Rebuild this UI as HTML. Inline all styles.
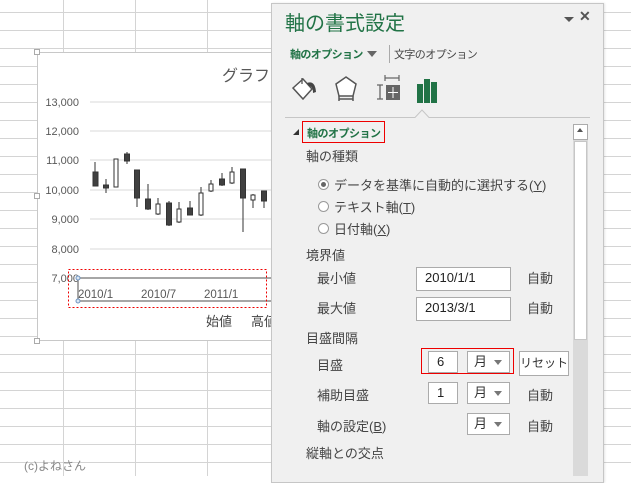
<!DOCTYPE html>
<html><head><meta charset="utf-8"><style>
*{margin:0;padding:0;box-sizing:border-box}
body{width:631px;height:476px;overflow:hidden;background:#fff;position:relative;font-family:"Liberation Sans","Noto Sans CJK JP",sans-serif;color:#444;font-size:12px}
.a{position:absolute;white-space:nowrap}
.vl{position:absolute;width:1px;background:#d4d4d4;top:0;height:476px}
.hl{position:absolute;height:1px;background:#d4d4d4;left:0;width:631px}
.inp{position:absolute;background:#fff;border:1px solid #ababab;font-size:13px;color:#222;padding-left:8px;line-height:20px}
.sel{position:absolute;background:#fff;border:1px solid #ababab;font-size:13px;color:#333;padding-left:6px;line-height:19px;width:43px;height:22px}
.sel:after{content:"";position:absolute;right:7px;top:8px;border:4px solid transparent;border-top:5px solid #777}
.lab{position:absolute;white-space:nowrap;font-size:13px;color:#444}
.rad{position:absolute;width:11px;height:11px;border:1px solid #999;border-radius:50%;background:#fff}
</style></head><body>
<div class="vl" style="left:63px"></div><div class="vl" style="left:135px"></div><div class="vl" style="left:207px"></div>
<div class="hl" style="top:12px"></div><div class="hl" style="top:30px"></div><div class="hl" style="top:48px"></div><div class="hl" style="top:66px"></div><div class="hl" style="top:84px"></div><div class="hl" style="top:102px"></div><div class="hl" style="top:120px"></div><div class="hl" style="top:138px"></div><div class="hl" style="top:156px"></div><div class="hl" style="top:174px"></div><div class="hl" style="top:192px"></div><div class="hl" style="top:210px"></div><div class="hl" style="top:228px"></div><div class="hl" style="top:246px"></div><div class="hl" style="top:264px"></div><div class="hl" style="top:282px"></div><div class="hl" style="top:300px"></div><div class="hl" style="top:318px"></div><div class="hl" style="top:336px"></div><div class="hl" style="top:354px"></div><div class="hl" style="top:372px"></div><div class="hl" style="top:390px"></div><div class="hl" style="top:408px"></div><div class="hl" style="top:426px"></div><div class="hl" style="top:444px"></div><div class="hl" style="top:462px"></div>
<div class="a" style="left:24px;top:457px;font-size:12px;color:#888">(c)よねさん</div>
<div class="a" style="left:37px;top:52px;width:240px;height:289px;background:#fff;border:1px solid #c8c8c8"></div>
<div class="a" style="left:34px;top:49px;width:6px;height:6px;border:1px solid #aaa;background:#fff"></div>
<div class="a" style="left:34px;top:193px;width:6px;height:6px;border:1px solid #aaa;background:#fff"></div>
<div class="a" style="left:34px;top:338px;width:6px;height:6px;border:1px solid #aaa;background:#fff"></div>
<svg class="a" style="left:38px;top:53px" width="234" height="287">
<g stroke="#d9d9d9"><line x1="52" y1="49" x2="234" y2="49"/><line x1="52" y1="78" x2="234" y2="78"/><line x1="52" y1="107" x2="234" y2="107"/><line x1="52" y1="137" x2="234" y2="137"/><line x1="52" y1="166" x2="234" y2="166"/><line x1="52" y1="196" x2="234" y2="196"/></g>
<g font-size="11" fill="#595959" text-anchor="end" font-family="Liberation Sans"><text x="41" y="53">13,000</text><text x="41" y="82">12,000</text><text x="41" y="111">11,000</text><text x="41" y="141">10,000</text><text x="41" y="170">9,000</text><text x="41" y="200">8,000</text><text x="41" y="229">7,000</text>
<g text-anchor="start" font-size="11.5"><text x="40" y="245">2010/1</text><text x="103" y="245">2010/7</text><text x="166" y="245">2011/1</text></g></g>
<text x="184" y="28" font-size="16" fill="#595959" font-family="Noto Sans CJK JP">グラフ</text>
<text x="168" y="273" font-size="13" fill="#444" font-family="Noto Sans CJK JP">始値</text><text x="213" y="273" font-size="13" fill="#444" font-family="Noto Sans CJK JP">高値</text>
<line x1="40" y1="225" x2="234" y2="225" stroke="#888" stroke-width="1.5"/>
<line x1="40" y1="248" x2="234" y2="248" stroke="#888" stroke-width="1.5"/>
<line x1="40" y1="225" x2="40" y2="248" stroke="#888" stroke-width="1.5"/>
<circle cx="40" cy="225" r="2" fill="#dbe7f3" stroke="#6d93c0"/><circle cx="40" cy="248" r="2" fill="#dbe7f3" stroke="#6d93c0"/>
<rect x="30.5" y="216.5" width="198" height="38" fill="none" stroke="#e00" stroke-dasharray="2,2"/>
<g stroke="#333" stroke-width="1">
<line x1="57" y1="109" x2="57" y2="133"/><rect x="55" y="119" width="5" height="14" fill="#404040"/>
<line x1="68" y1="126" x2="68" y2="140"/><rect x="65.5" y="132" width="5" height="3" fill="#404040"/>
<line x1="78" y1="106" x2="78" y2="134"/><rect x="76" y="106" width="4" height="28" fill="#fff"/>
<line x1="89" y1="99" x2="89" y2="111"/><rect x="86.5" y="101" width="5" height="7" fill="#404040"/>
<line x1="99" y1="117" x2="99" y2="154"/><rect x="96.5" y="117" width="5" height="28" fill="#404040"/>
<line x1="110" y1="131" x2="110" y2="157"/><rect x="107.5" y="146" width="5" height="10" fill="#404040"/>
<line x1="120" y1="145" x2="120" y2="162"/><rect x="118" y="151" width="4" height="10" fill="#fff"/>
<line x1="131" y1="148" x2="131" y2="173"/><rect x="128.5" y="150" width="5" height="22" fill="#404040"/>
<line x1="141" y1="149" x2="141" y2="170"/><rect x="139" y="156" width="4" height="13" fill="#fff"/>
<line x1="152" y1="148" x2="152" y2="162"/><rect x="149.5" y="155" width="5" height="7" fill="#404040"/>
<line x1="163" y1="134" x2="163" y2="163"/><rect x="161" y="140" width="4" height="22" fill="#fff"/>
<line x1="173" y1="127" x2="173" y2="139"/><rect x="171" y="131" width="4" height="7" fill="#fff"/>
<line x1="184" y1="120" x2="184" y2="133"/><rect x="181.5" y="126" width="5" height="6" fill="#404040"/>
<line x1="194" y1="114" x2="194" y2="131"/><rect x="192" y="119" width="4" height="11" fill="#fff"/>
<line x1="205" y1="116" x2="205" y2="179"/><rect x="202.5" y="116" width="5" height="29" fill="#404040"/>
<line x1="215" y1="141" x2="215" y2="155"/><rect x="213" y="142" width="4" height="5" fill="#fff"/>
<line x1="226" y1="138" x2="226" y2="155"/><rect x="223.5" y="138" width="5" height="10" fill="#404040"/>
</g></svg>
<div class="a" style="left:271px;top:3px;width:333px;height:480px;background:#f0f0f0;border:1px solid #c6c6c6;box-shadow:1px 0 2px rgba(0,0,0,.1)"></div>
<div class="a" style="left:285px;top:7px;font-size:20px;color:#217346">軸の書式設定</div>
<div class="a" style="left:564px;top:17px;border:5px solid transparent;border-top:5px solid #555"></div>
<div class="a" style="left:579px;top:8px;font-size:14px;font-weight:bold;color:#555">✕</div>
<div class="a" style="left:290px;top:46px;font-size:11px;font-weight:bold;color:#217346;letter-spacing:-0.6px">軸のオプション</div>
<div class="a" style="left:367px;top:51px;border:5px solid transparent;border-top:6px solid #666"></div>
<div class="a" style="left:389px;top:45px;width:1px;height:18px;background:#aaa"></div>
<div class="a" style="left:394px;top:46px;font-size:11px;color:#444;letter-spacing:-0.6px">文字のオプション</div>
<svg class="a" style="left:285px;top:70px" width="306" height="55">
<path d="M8 18 L18 9 L27 19 L18 29 Z" fill="#fff" stroke="#555" stroke-width="1.5"/><path d="M17 8 L17 14" stroke="#555" stroke-width="1.3"/><path d="M22 13 Q30 10 31 22 L28 23 Q28 16 24 16Z" fill="#444"/>
<path d="M61 7 L71 14 L68 26 L54 26 L51 14 Z" fill="#fff" stroke="#555" stroke-width="1.5"/><path d="M54 29 L68 29 M54 26 V31 M68 26 V31" stroke="#555" stroke-width="1.5"/>
<path d="M100 8 H114 M100 5 V11 M114 5 V11" stroke="#666" stroke-width="1.2"/><path d="M95 15 V29 M92 15 H98 M92 29 H98" stroke="#666" stroke-width="1.3"/><rect x="101" y="15" width="14" height="15" fill="#666"/><path d="M108 17 V28 M103 22.5 H113" stroke="#fff" stroke-width="1"/>
<rect x="132" y="14" width="6" height="19" fill="#217346"/><rect x="139" y="9" width="6" height="24" fill="#217346"/><rect x="146" y="12" width="6" height="21" fill="#217346"/>
<path d="M0 47.5 H130 L137 40 L144 47.5 H305" fill="none" stroke="#c6c6c6"/>
</svg>
<div class="a" style="left:293px;top:129px;border:3px solid transparent;border-right:3px solid #333;border-bottom:3px solid #333"></div>
<div class="a" style="left:302px;top:121px;width:83px;height:22px;border:1.5px solid #e00"></div>
<div class="a" style="left:307px;top:125px;font-size:11px;font-weight:bold;color:#217346;letter-spacing:-0.5px">軸のオプション</div>
<div class="lab" style="left:306px;top:146px">軸の種類</div>
<div class="rad" style="left:318px;top:179px"></div><div class="a" style="left:321px;top:182px;width:5px;height:5px;border-radius:50%;background:#666"></div>
<div class="rad" style="left:318px;top:201px"></div><div class="rad" style="left:318px;top:223px"></div>
<div class="lab" style="left:334px;top:175px">データを基準に自動的に選択する(<u>Y</u>)</div>
<div class="lab" style="left:334px;top:197px">テキスト軸(<u>T</u>)</div>
<div class="lab" style="left:334px;top:219px">日付軸(<u>X</u>)</div>
<div class="lab" style="left:306px;top:245px">境界値</div>
<div class="lab" style="left:317px;top:268px">最小値</div><div class="inp" style="left:416px;top:267px;width:95px;height:24px">2010/1/1</div><div class="lab" style="left:527px;top:268px">自動</div>
<div class="lab" style="left:317px;top:298px">最大値</div><div class="inp" style="left:416px;top:297px;width:95px;height:24px">2013/3/1</div><div class="lab" style="left:527px;top:298px">自動</div>
<div class="lab" style="left:306px;top:328px">目盛間隔</div>
<div class="lab" style="left:317px;top:355px">目盛</div>
<div class="inp" style="left:428px;top:351px;width:30px;height:22px">6</div><div class="sel" style="left:467px;top:351px">月</div>
<div class="a" style="left:421px;top:348px;width:93px;height:26px;border:1.5px solid #e00"></div>
<div class="a" style="left:519px;top:351px;width:50px;height:25px;background:#fff;border:1px solid #ababab;font-size:12px;text-align:center;line-height:23px;color:#333">リセット</div>
<div class="lab" style="left:317px;top:385px">補助目盛</div>
<div class="inp" style="left:428px;top:382px;width:30px;height:22px">1</div><div class="sel" style="left:467px;top:382px">月</div><div class="lab" style="left:527px;top:385px">自動</div>
<div class="lab" style="left:317px;top:416px">軸の設定(<u>B</u>)</div>
<div class="sel" style="left:467px;top:413px">月</div><div class="lab" style="left:527px;top:416px">自動</div>
<div class="lab" style="left:306px;top:443px">縦軸との交点</div>
<div class="a" style="left:573px;top:124px;width:15px;height:352px;background:#dadada"></div>
<div class="a" style="left:573px;top:124px;width:15px;height:16px;background:#fff;border:1px solid #ababab"></div>
<div class="a" style="left:577px;top:128px;border:3.5px solid transparent;border-bottom:4px solid #555;border-top:0"></div>
<div class="a" style="left:574px;top:141px;width:13px;height:199px;background:#fff;border:1px solid #c6c6c6"></div>
</body></html>
